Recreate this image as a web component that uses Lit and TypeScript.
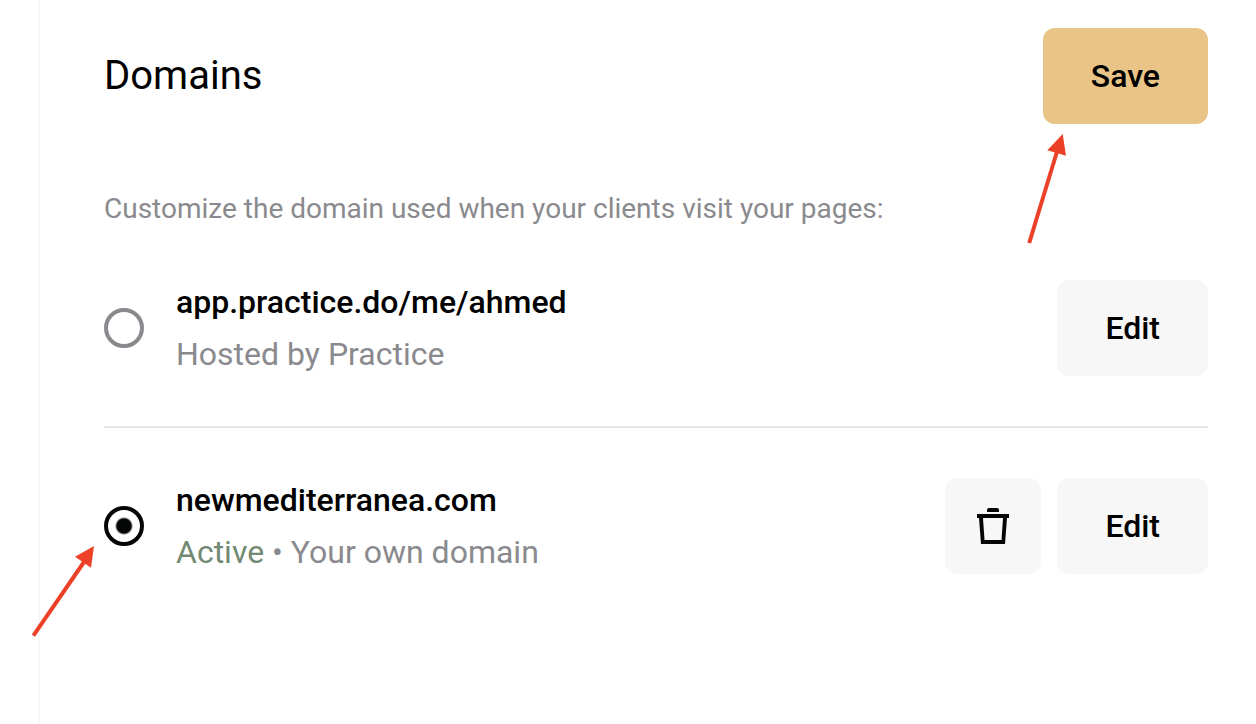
import { LitElement, html, css, svg } from "lit";
import { customElement, state } from "lit/decorators.js";

interface Domain {
  id: string;
  name: string;
  note: string;
  active: boolean;
  removable: boolean;
}

const DOMAINS: Domain[] = [
  { id: "hosted", name: "app.practice.do/me/ahmed", note: "Hosted by Practice", active: false, removable: false },
  { id: "custom", name: "newmediterranea.com", note: "Your own domain", active: true, removable: true },
];

const arrow = (line: string, head: string) => svg`
  <path d=${line} stroke="#ec4128" stroke-width="4" fill="none"></path>
  <path d=${head} fill="#ec4128"></path>`;

@customElement("app-root")
export class AppRoot extends LitElement {
  static styles = css`
    :host {
      display: block;
      min-height: 100vh;
      box-sizing: border-box;
      padding-left: 38px;
      background: #fff;
      color: #000;
      font-family: Roboto, "Liberation Sans", sans-serif;
    }
    main {
      box-sizing: border-box;
      min-height: 100vh;
      border-left: 2px solid #f7f7f7;
      padding: 28px 48px 48px 64px;
    }
    header {
      display: flex;
      justify-content: space-between;
      align-items: center;
      position: relative;
    }
    h1 {
      margin: 0;
      font-size: 40px;
      line-height: 48px;
      font-weight: 400;
    }
    button {
      height: 96px;
      padding: 0 48px;
      border: 0;
      border-radius: 12px;
      background: #f7f7f7;
      color: #000;
      font: 500 32px/48px Roboto, "Liberation Sans", sans-serif;
      cursor: pointer;
    }
    .save {
      background: #eac487;
    }
    .icon {
      width: 96px;
      padding: 0;
      display: grid;
      place-items: center;
    }
    fieldset {
      border: 0;
      margin: 64px 0 0;
      padding: 0;
      min-width: 0;
    }
    legend {
      padding: 0;
      color: #8a8a8e;
      font-size: 28px;
      line-height: 42px;
    }
    .row {
      display: flex;
      align-items: center;
      gap: 16px;
      padding: 46px 0;
    }
    .row + .row {
      border-top: 2px solid #e5e5ea;
    }
    .choice {
      position: relative;
      flex: 1;
      display: flex;
      align-items: center;
      gap: 32px;
      font-size: 32px;
      line-height: 52px;
    }
    input {
      appearance: none;
      flex: none;
      box-sizing: border-box;
      width: 40px;
      height: 40px;
      margin: 0;
      border: 4px solid #8a8a8e;
      border-radius: 50%;
    }
    input:checked {
      border-color: #040606;
      background: radial-gradient(circle, #040606 7px, transparent 9px);
    }
    .name {
      display: block;
      font-weight: 500;
    }
    .note {
      display: block;
      color: #8a8a8e;
    }
    .active {
      color: #728a73;
    }
    .arrow {
      position: absolute;
      overflow: visible;
      pointer-events: none;
    }
    .to-save {
      right: 140px;
      top: 104px;
    }
    .to-radio {
      left: -75px;
      top: 71px;
    }
  `;

  @state() private selected = "custom";

  private row(d: Domain) {
    return html`
      <div class="row">
        <label class="choice">
          <input
            type="radio"
            name="domain"
            .value=${d.id}
            .checked=${this.selected === d.id}
            @change=${() => (this.selected = d.id)}
          />
          <span>
            <span class="name">${d.name}</span>
            <span class="note">${d.active ? html`<span class="active">Active</span> • ` : ""}${d.note}</span>
          </span>
          ${d.active
            ? html`<svg class="arrow to-radio" width="66" height="96" aria-hidden="true">
                ${arrow("M4.4 90.6 L55 17", "M65 1 L62 22.7 L46 11.7Z")}
              </svg>`
            : ""}
        </label>
        ${d.removable
          ? html`<button class="icon" type="button" aria-label="Delete ${d.name}">
              <svg width="40" height="40" viewBox="0 0 40 40" fill="#040606">
                <path d="M14 6V4Q14 2 16 2H24Q26 2 26 4V6Z"></path>
                <path
                  fill-rule="evenodd"
                  d="M4 8H36V12H34L32 38H8L6 12H4ZM10 12L11.5 34H28.5L30 12Z"
                ></path>
              </svg>
            </button>`
          : ""}
        <button type="button">Edit</button>
      </div>
    `;
  }

  render() {
    return html`
      <main>
        <header>
          <h1>Domains</h1>
          <button class="save" type="button">Save</button>
          <svg class="arrow to-save" width="40" height="112" aria-hidden="true">
            ${arrow("M1.2 111 L29.5 18", "M34.7 2 L38 23.8 L19.3 18.2Z")}
          </svg>
        </header>
        <fieldset>
          <legend>Customize the domain used when your clients visit your pages:</legend>
          ${DOMAINS.map((d) => this.row(d))}
        </fieldset>
      </main>
    `;
  }
}
